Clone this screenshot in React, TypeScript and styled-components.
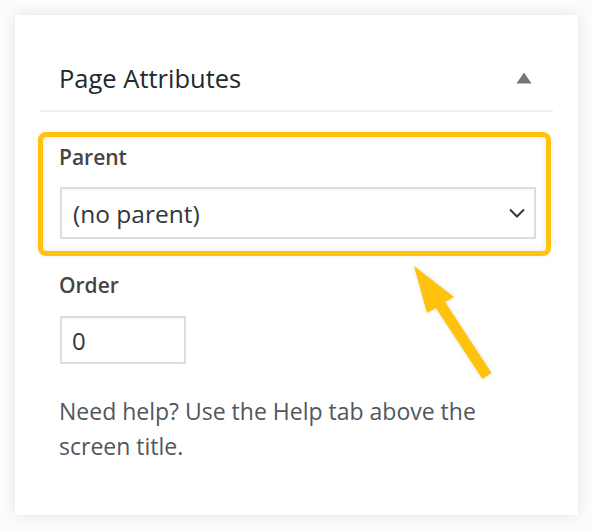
import styled, { createGlobalStyle } from "styled-components";

const GlobalStyle = createGlobalStyle`
  html, body {
    margin: 0;
    padding: 0;
    background: #fcfcfc;
  }
  body {
    font-family: "Open Sans", "Noto Sans", "Liberation Sans", sans-serif;
  }
`;

const highlight = "#ffc30f";

const Page = styled.div`
  position: relative;
  width: 593px;
  height: 530px;
  padding: 15px;
  box-sizing: border-box;
`;

const Card = styled.section`
  height: 500px;
  box-sizing: border-box;
  padding: 0 25px;
  background: #fff;
  box-shadow: 0 0 14px rgba(0, 0, 0, 0.1);
`;

const Header = styled.div`
  display: flex;
  align-items: center;
  justify-content: space-between;
  padding: 48px 21px 17px 19px;
  border-bottom: 2px solid #eeeeee;
`;

const Title = styled.h2`
  margin: 0;
  font-size: 25.5px;
  line-height: 30px;
  font-weight: 400;
  color: #23282d;
`;

const Body = styled.div`
  display: flex;
  flex-direction: column;
  padding-top: 20px;
`;

const Highlight = styled.div`
  display: flex;
  flex-direction: column;
  margin: 0 2px 0 -2px;
  padding: 6px 10px 12px 16px;
  border: 5px solid ${highlight};
  border-radius: 8px;
  box-shadow: inset 0 0 7px rgba(0, 0, 0, 0.1), 0 0 4px rgba(0, 0, 0, 0.08);
`;

const Label = styled.div<{ $top?: number }>`
  margin-top: ${({ $top = 0 }) => $top}px;
  padding-left: ${({ $top = 0 }) => ($top ? 19 : 0)}px;
  font-size: 21px;
  line-height: 28px;
  font-weight: 600;
  color: #444;
`;

const SelectBox = styled.div`
  display: flex;
  align-items: center;
  justify-content: space-between;
  height: 52px;
  margin: 16px 0 0 1px;
  padding: 0 9px 0 11px;
  box-sizing: border-box;
  border: 2px solid #dddddd;
  background: #fff;
  font-size: 24.5px;
  color: #32373c;
  box-shadow: inset 0 1px 2px rgba(0, 0, 0, 0.05);
`;

const NumberInput = styled.input`
  width: 126px;
  height: 48px;
  margin: 17px 0 0 20px;
  padding: 0 10px;
  box-sizing: border-box;
  border: 2px solid #dddddd;
  background: #fff;
  font-family: inherit;
  font-size: 24px;
  color: #32373c;
  outline: none;
  box-shadow: inset 0 1px 2px rgba(0, 0, 0, 0.05);
`;

const Help = styled.p`
  margin: 30px 0 0 19px;
  padding-right: 17px;
  font-size: 23px;
  line-height: 35px;
  color: #50575e;
`;

const Overlay = styled.svg`
  position: absolute;
  left: 0;
  top: 0;
  pointer-events: none;
  filter: drop-shadow(0 0 2px rgba(0, 0, 0, 0.12));
`;

function Caret() {
  return (
    <svg width="16" height="12" viewBox="0 0 16 12">
      <polygon points="0.5,11.5 15.5,11.5 8,0.5" fill="#72777c" />
    </svg>
  );
}

function Chevron() {
  return (
    <svg width="16" height="10" viewBox="0 0 16 10">
      <polyline
        points="1,1.5 8,8.5 15,1.5"
        fill="none"
        stroke="#32373c"
        strokeWidth="2"
      />
    </svg>
  );
}

function Arrow() {
  return (
    <Overlay width="593" height="530" viewBox="0 0 593 530">
      <polygon
        points="414,266 454,297 445.1,302 491.6,373 482.4,379 435.9,308 427,313"
        fill={highlight}
      />
    </Overlay>
  );
}

export default function App() {
  return (
    <Page>
      <GlobalStyle />
      <Card>
        <Header>
          <Title>Page Attributes</Title>
          <Caret />
        </Header>
        <Body>
          <Highlight>
            <Label>Parent</Label>
            <SelectBox>
              <span>(no parent)</span>
              <Chevron />
            </SelectBox>
          </Highlight>
          <Label $top={15}>Order</Label>
          <NumberInput type="text" defaultValue="0" readOnly />
          <Help>Need help? Use the Help tab above the screen title.</Help>
        </Body>
      </Card>
      <Arrow />
    </Page>
  );
}
